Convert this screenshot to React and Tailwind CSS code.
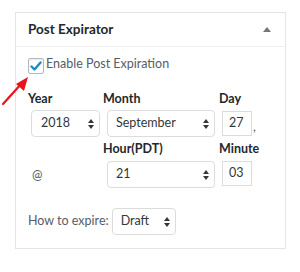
import React from "react";

function Arrows() {
  return (
    <svg width="6" height="10" viewBox="0 0 6 10" className="shrink-0">
      <path d="M3 0 L6 4 L0 4 Z" fill="#32373c" />
      <path d="M0 6 L6 6 L3 10 Z" fill="#32373c" />
    </svg>
  );
}

function Select({ value, w, pl = "pl-[9px]" }) {
  return (
    <div
      className={`flex items-center justify-between h-[27px] ${w} ${pl} pr-[5px] border border-[#dcdcde] rounded-[4px] bg-white text-[12.5px] text-[#32373c]`}
    >
      <span>{value}</span>
      <Arrows />
    </div>
  );
}

function Input({ value }) {
  return (
    <div className="flex items-center h-[25px] w-[30px] pl-[6px] border border-[#dcdcde] bg-white text-[12.5px] text-[#32373c]">
      {value}
    </div>
  );
}

export default function App() {
  return (
    <div
      className="relative w-[300px] h-[272px] bg-white pt-[12px] pl-[15px]"
      style={{ fontFamily: "Lato, 'Open Sans', sans-serif" }}
    >
      <div className="w-[271px] border border-[#e5e5e5]">
        <div className="flex items-center justify-between h-[34px] pl-[12px] pr-[14px] border-b border-[#eeeeee]">
          <span className="text-[13.5px] font-bold text-[#23282d]">Post Expirator</span>
          <svg width="8" height="5" viewBox="0 0 8 5">
            <path d="M4 0 L8 5 L0 5 Z" fill="#72777c" />
          </svg>
        </div>
        <div className="pl-[12px] pt-[11px] pb-[13px]">
          <div className="flex items-start">
            <div className="w-[16px] h-[16px] border border-[#b4b9be] rounded-[2px] bg-white flex items-center justify-center shadow-[inset_0_1px_2px_rgba(0,0,0,0.1)]">
              <svg width="12" height="11" viewBox="0 0 12 11">
                <path d="M1.5 5.5 L4.5 8.5 L10.5 1.5" stroke="#1e8cbe" strokeWidth="2.4" fill="none" strokeLinecap="round" strokeLinejoin="round" />
              </svg>
            </div>
            <span className="ml-[2px] -mt-[3px] text-[12.5px] leading-[18px] text-[#555d66]">
              Enable Post Expiration
            </span>
          </div>

          <div className="flex mt-[16px]">
            <div className="w-[75px]">
              <div className="text-[12.5px] font-bold leading-[18px] text-[#23282d]">Year</div>
              <div className="mt-[2px] ml-[3px]">
                <Select value="2018" w="w-[69px]" />
              </div>
            </div>
            <div className="w-[116px]">
              <div className="text-[12.5px] font-bold leading-[18px] text-[#23282d]">Month</div>
              <div className="mt-[2px] ml-[4px]">
                <Select value="September" w="w-[108px]" pl="pl-[8px]" />
              </div>
            </div>
            <div>
              <div className="text-[12.5px] font-bold leading-[18px] text-[#23282d]">Day</div>
              <div className="mt-[3px] ml-[3px] flex items-end">
                <Input value="27" />
                <span className="ml-[1px] text-[12.5px] text-[#555d66] leading-[18px]">,</span>
              </div>
            </div>
          </div>

          <div className="flex mt-[3px]">
            <div className="w-[75px] flex items-end">
              <div className="ml-[4px] mb-[4px] text-[12.5px] leading-[18px] text-[#555d66]">@</div>
            </div>
            <div className="w-[116px]">
              <div className="text-[12.5px] font-bold leading-[18px] text-[#23282d]">Hour(PDT)</div>
              <div className="mt-[3px] ml-[4px]">
                <Select value="21" w="w-[108px]" pl="pl-[8px]" />
              </div>
            </div>
            <div>
              <div className="text-[12.5px] font-bold leading-[18px] text-[#23282d]">Minute</div>
              <div className="mt-[3px] ml-[3px]">
                <Input value="03" />
              </div>
            </div>
          </div>

          <div className="flex items-center mt-[20px]">
            <span className="text-[12.5px] text-[#555d66]">How to expire:</span>
            <div className="ml-[3px]">
              <Select value="Draft" w="w-[64px]" pl="pl-[8px]" />
            </div>
          </div>
        </div>
      </div>

      <svg className="absolute left-0 top-[74px]" width="34" height="34" viewBox="0 0 34 34">
        <path d="M3 30 L22 9" stroke="#e8141c" strokeWidth="2.2" strokeLinecap="round" />
        <path d="M28 3 L16 10 L24 17 Z" fill="#e8141c" />
      </svg>
    </div>
  );
}
